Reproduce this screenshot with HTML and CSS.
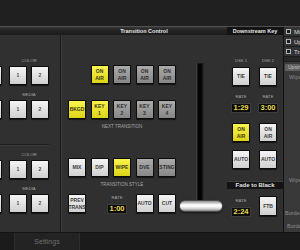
FILE: index.html
```html
<!DOCTYPE html>
<html lang="en">
<head>
  <meta charset="UTF-8" />
  <meta name="viewport" content="width=device-width, initial-scale=1.0"/>
  <title>Switcher Control</title>
  <link rel="stylesheet" href="styles.css">
</head>
<body>
  <div class="app">
    <div class="topbar"></div>

    <div class="main">
      <div class="mixer">
        <div class="heads">
          <div class="head-keys"></div>
          <div class="head-trans">Transition Control</div>
          <div class="head-dsk">Downstream Key</div>
        </div>

        <div class="cols">
          <!-- Key sources -->
          <section class="keys">
            <div class="block first">
              <div class="row">
                <div class="group"><div class="lbl"></div><div class="btns"><div class="btn"></div><div class="btn"></div></div></div>
                <div class="group"><div class="lbl">COLOR</div><div class="btns"><div class="btn">1</div><div class="btn">2</div></div></div>
              </div>
              <div class="row">
                <div class="group"><div class="lbl"></div><div class="btns"><div class="btn"></div><div class="btn"></div></div></div>
                <div class="group"><div class="lbl">MEDIA</div><div class="btns"><div class="btn">1</div><div class="btn">2</div></div></div>
              </div>
            </div>
            <div class="block">
              <div class="row">
                <div class="group"><div class="lbl"></div><div class="btns"><div class="btn"></div><div class="btn"></div></div></div>
                <div class="group"><div class="lbl">COLOR</div><div class="btns"><div class="btn">1</div><div class="btn">2</div></div></div>
              </div>
              <div class="row">
                <div class="group"><div class="lbl"></div><div class="btns"><div class="btn"></div><div class="btn"></div></div></div>
                <div class="group"><div class="lbl">MEDIA</div><div class="btns"><div class="btn">1</div><div class="btn">2</div></div></div>
              </div>
            </div>
          </section>

          <!-- Transition control -->
          <section class="trans">
            <div class="pad">
              <div class="grid5">
                <div class="btn yellow skip">ON<br>AIR</div>
                <div class="btn gray">ON<br>AIR</div>
                <div class="btn gray">ON<br>AIR</div>
                <div class="btn gray">ON<br>AIR</div>
              </div>
              <div class="grid5 next">
                <div class="btn yellow">BKGD</div>
                <div class="btn yellow">KEY<br>1</div>
                <div class="btn gray">KEY<br>2</div>
                <div class="btn gray">KEY<br>3</div>
                <div class="btn gray">KEY<br>4</div>
              </div>
              <div class="caption">NEXT TRANSITION</div>
              <div class="grid5 style">
                <div class="btn">MIX</div>
                <div class="btn">DIP</div>
                <div class="btn yellow">WIPE</div>
                <div class="btn gray">DVE</div>
                <div class="btn gray">STING</div>
              </div>
              <div class="caption">TRANSITION STYLE</div>
              <div class="grid5 action">
                <div class="btn">PREV<br>TRANS</div>
                <div class="rate wide">
                  <div class="lbl">RATE</div>
                  <div class="rate-box">1:00</div>
                </div>
                <div class="btn">AUTO</div>
                <div class="btn">CUT</div>
              </div>
            </div>
            <div class="fader">
              <div class="slot"></div>
              <div class="handle"></div>
            </div>
          </section>

          <!-- Downstream key -->
          <section class="dsk">
            <div class="pair">
              <div class="lbl">DSK 1</div>
              <div class="lbl">DSK 2</div>
            </div>
            <div class="pair">
              <div class="btn">TIE</div>
              <div class="btn">TIE</div>
            </div>
            <div class="pair rates">
              <div class="rate">
                <div class="lbl">RATE</div>
                <div class="rate-box">1:29</div>
              </div>
              <div class="rate">
                <div class="lbl">RATE</div>
                <div class="rate-box">3:00</div>
              </div>
            </div>
            <div class="pair onair">
              <div class="btn yellow">ON<br>AIR</div>
              <div class="btn">ON<br>AIR</div>
            </div>
            <div class="pair auto">
              <div class="btn">AUTO</div>
              <div class="btn">AUTO</div>
            </div>
            <div class="ftb-head">Fade to Black</div>
            <div class="pair ftb">
              <div class="rate">
                <div class="lbl">RATE</div>
                <div class="rate-box">2:24</div>
              </div>
              <div class="btn tall">FTB</div>
            </div>
          </section>
        </div>
      </div>

      <aside class="side">
        <div class="checks">
          <div class="check"><span class="box"></span>Mix Effects</div>
          <div class="check"><span class="box"></span>Upstream Key</div>
          <div class="check"><span class="box"></span>Transition</div>
        </div>
        <div class="props">
          <div class="tab-btn">Upstream Key 1</div>
          <div class="prop">Wipe</div>
          <div class="prop low">Wipe</div>
          <div class="prop border">Border</div>
          <div class="prop border2">Border</div>
        </div>
      </aside>
    </div>

    <div class="bottom">
      <div class="tab">Settings</div>
    </div>
  </div>
</body>
</html>
```

FILE: styles.css
```css
* {
  box-sizing: border-box;
}

body {
  margin: 0;
  width: 300px;
  height: 250px;
  overflow: hidden;
  background: #202020;
  font-family: "Liberation Sans", Arial, sans-serif;
}

.app {
  display: flex;
  flex-direction: column;
  height: 250px;
}

.topbar {
  height: 27px;
  flex-shrink: 0;
  background: #202020;
  border-bottom: 1px solid #515151;
}

.main {
  display: flex;
  height: 205px;
  flex-shrink: 0;
}

.mixer {
  width: 283px;
  display: flex;
  flex-direction: column;
}

/* Section titles */
.heads {
  display: flex;
  height: 8px;
  background: linear-gradient(#383838, #242424 35%, #1c1c1c);
  color: #e6e6e6;
  font-size: 5.5px;
  font-weight: bold;
  line-height: 8px;
  white-space: nowrap;
}

.head-keys {
  width: 61px;
}

.head-trans {
  width: 166px;
  text-align: center;
}

.head-dsk {
  width: 56px;
  background: #131313;
  text-align: center;
}

.cols {
  display: flex;
  height: 197px;
  background: #303030;
}

/* Buttons */
.btn {
  width: 18px;
  height: 19px;
  display: flex;
  align-items: center;
  justify-content: center;
  text-align: center;
  border: 1px solid #0b0b0b;
  border-radius: 1px;
  background: linear-gradient(#f4f4f4, #d0d0d0);
  box-shadow: 0 1px 1px rgba(0, 0, 0, 0.6);
  color: #3a3a3a;
  font-size: 5px;
  font-weight: bold;
  line-height: 7px;
  white-space: nowrap;
}

.btn.gray {
  background: linear-gradient(#ababab, #878787);
  color: #2e2e2e;
}

.btn.yellow {
  background: linear-gradient(#fbf44c, #ddd317);
  color: #3a3a1a;
}

.lbl {
  height: 5px;
  line-height: 5px;
  font-size: 4.2px;
  color: #a6a6a6;
  text-align: center;
  white-space: nowrap;
}

.rate {
  display: flex;
  flex-direction: column;
  align-items: center;
}

.rate .lbl {
  margin-bottom: 1px;
}

.rate-box {
  width: 20px;
  height: 10px;
  background: #0c0c0c;
  border: 1px solid #3d3d3d;
  color: #e9dc4c;
  font-size: 7.5px;
  font-weight: bold;
  line-height: 8px;
  text-align: center;
}

/* Left key sources */
.keys {
  width: 61px;
  border-right: 1px solid #1a1a1a;
  overflow: hidden;
  padding-right: 11px;
}

.block {
  padding-top: 7px;
  border-top: 1px solid #1c1c1c;
  box-shadow: inset 0 1px #3b3b3b;
}

.block.first {
  height: 109px;
  padding-top: 23px;
  border-top: none;
  box-shadow: none;
}

.row {
  display: flex;
  justify-content: flex-end;
  gap: 7px;
}

.row + .row {
  margin-top: 7px;
}

.group {
  flex-shrink: 0;
}

.group .lbl {
  margin-bottom: 3px;
}

.btns {
  display: flex;
  gap: 4px;
}

.keys .btn {
  color: #4a4a4a;
}

/* Transition control */
.trans {
  width: 166px;
  display: flex;
  border-left: 1px solid #3c3c3c;
}

.pad {
  width: 118px;
  padding: 30px 0 0 6px;
}

.grid5 {
  display: grid;
  grid-template-columns: repeat(5, 18px);
  column-gap: 4.5px;
}

.skip {
  grid-column-start: 2;
}

.next {
  margin-top: 16px;
}

.caption {
  width: 108px;
  height: 5px;
  margin-top: 5px;
  line-height: 5px;
  font-size: 4.5px;
  color: #a6a6a6;
  text-align: center;
  white-space: nowrap;
}

.style {
  margin-top: 29px;
}

.action {
  margin-top: 7px;
}

.rate.wide {
  grid-column: 2 / 4;
  justify-self: end;
  margin-right: 4px;
}

.action .rate .lbl {
  margin-top: 1px;
  margin-bottom: 4px;
}

.fader {
  width: 42px;
  position: relative;
}

.slot {
  width: 6px;
  height: 142px;
  margin: 28px 0 0 17px;
  background: #050505;
  border: 1px solid #1a1a1a;
  box-shadow: -1px 0 #3e3e3e, 1px 0 #262626;
}

.handle {
  position: absolute;
  left: -1px;
  top: 165px;
  width: 44px;
  height: 12px;
  border-radius: 6px;
  border: 1px solid #4a4a4a;
  background: linear-gradient(#8c8c8c, #f3f3f3 35%, #ffffff 50%, #cdcdcd 80%, #7c7c7c);
  box-shadow: 0 1px 2px rgba(0, 0, 0, 0.6);
}

/* Downstream key */
.dsk {
  width: 56px;
  padding: 23px 0 0 5px;
}

.pair {
  display: grid;
  grid-template-columns: 18px 18px;
  column-gap: 9px;
  justify-items: center;
}

.pair .lbl {
  margin-bottom: 4px;
}

.rates {
  margin-top: 8px;
}

.onair {
  margin-top: 10px;
}

.auto {
  margin-top: 8px;
}

.ftb-head {
  width: 56px;
  height: 8px;
  margin: 12px 0 0 -5px;
  background: #141414;
  border-top: 1px solid #3e3e3e;
  color: #e2e2e2;
  font-size: 6px;
  font-weight: bold;
  line-height: 7px;
  text-align: center;
  white-space: nowrap;
}

.ftb {
  margin-top: 7px;
}

.ftb .rate .lbl {
  margin-top: 2px;
  margin-bottom: 4px;
}

.btn.tall {
  height: 20px;
}

/* Right side panel */
.side {
  width: 17px;
  background: #262626;
  border-left: 1px solid #121212;
  overflow: hidden;
  white-space: nowrap;
}

.checks {
  height: 34px;
}

.check {
  height: 10px;
  display: flex;
  align-items: center;
  gap: 3px;
  padding-left: 2px;
  background: #333;
  border-bottom: 1px solid #1b1b1b;
  color: #dcdcdc;
  font-size: 6px;
}

.box {
  width: 5px;
  height: 5px;
  flex-shrink: 0;
  border: 1px solid #b5b5b5;
  background: #1c1c1c;
}

.props {
  height: 171px;
  background: #393939;
  border-top: 1px solid #1e1e1e;
}

.tab-btn {
  height: 7px;
  margin: 2px 0 0 1px;
  padding-left: 3px;
  background: #5e5e5e;
  border-radius: 1px;
  color: #c4c4c4;
  font-size: 5px;
  line-height: 7px;
}

.prop {
  margin-top: 3px;
  padding-left: 5px;
  color: #8c8c8c;
  font-size: 5.5px;
  line-height: 6px;
}

.prop.low {
  margin-top: 97px;
}

.prop.border {
  margin-top: 27px;
  padding-left: 1px;
}

.prop.border2 {
  margin-top: 7px;
  padding-left: 3px;
}

/* Bottom tabs */
.bottom {
  height: 18px;
  flex-shrink: 0;
  display: flex;
  background: #1b1b1b;
  border-top: 1px solid #141414;
}

.tab {
  width: 66px;
  margin-left: 14px;
  background: #232323;
  border-left: 1px solid #2e2e2e;
  border-right: 1px solid #2e2e2e;
  color: #6e6e6e;
  font-size: 7px;
  line-height: 17px;
  text-align: center;
}
```
